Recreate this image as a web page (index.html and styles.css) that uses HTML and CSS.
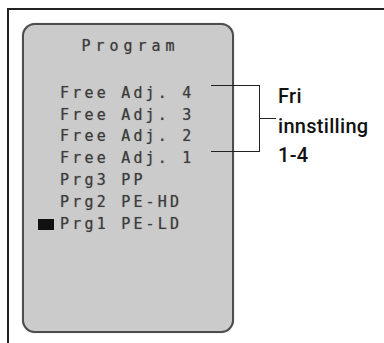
FILE: index.html
```html
<!DOCTYPE html>
<html lang="no">
<head>
  <meta charset="UTF-8" />
  <title>Program</title>
  <link rel="stylesheet" href="styles.css">
</head>
<body>
  <div class="frame">
    <div class="panel">
      <div class="title">Program</div>
      <ul class="programs">
        <li><span class="marker"></span>Free Adj. 4</li>
        <li><span class="marker"></span>Free Adj. 3</li>
        <li><span class="marker"></span>Free Adj. 2</li>
        <li><span class="marker"></span>Free Adj. 1</li>
        <li><span class="marker"></span>Prg3 PP</li>
        <li><span class="marker"></span>Prg2 PE-HD</li>
        <li class="active"><span class="marker"></span>Prg1 PE-LD</li>
      </ul>
    </div>
    <div class="bracket"></div>
    <div class="tick"></div>
    <div class="label">Fri<br>innstilling<br>1-4</div>
  </div>
</body>
</html>
```

FILE: styles.css
```css
body {
  margin: 0;
  background-color: #fff;
}
.frame {
  margin: 8px 0 0 7px;
  height: 335px;
  border-top: 2px solid #222;
  border-left: 2px solid #222;
  display: flex;
  align-items: flex-start;
}
/* Display panel */
.panel {
  margin: 13px 0 0 13px;
  width: 212px;
  height: 310px;
  box-sizing: border-box;
  background-color: #cbcbcb;
  border: 2px solid #4d4d4d;
  border-radius: 13px;
  box-shadow: 0 0 1px #888;
  padding-top: 11px;
  font-family: "DejaVu Sans Mono", monospace;
  font-size: 15px;
  line-height: 21.8px;
  color: #3c3c3c;
  text-shadow: 0 0 1px rgba(0, 0, 0, 0.4);
}
.title {
  text-align: center;
  letter-spacing: 5px;
  padding-left: 5px;
}
.programs {
  list-style: none;
  margin: 25px 0 0;
  padding: 0 0 0 14px;
}
.programs li {
  display: flex;
  align-items: center;
  letter-spacing: 3.2px;
  white-space: pre;
}
.marker {
  width: 16px;
  height: 11px;
  margin-right: 6px;
}
.active .marker {
  background-color: #111;
}
/* Annotation */
.bracket {
  margin: 75px 0 0 -23px;
  width: 48px;
  height: 65px;
  border: 1px solid #222;
  border-left: none;
}
.tick {
  margin-top: 108px;
  width: 16px;
  height: 1px;
  background-color: #222;
}
.label {
  margin: 72px 0 0 2px;
  font-family: Roboto, sans-serif;
  font-weight: 500;
  font-size: 20px;
  line-height: 29.5px;
  letter-spacing: 0.3px;
  color: #111;
}
```
